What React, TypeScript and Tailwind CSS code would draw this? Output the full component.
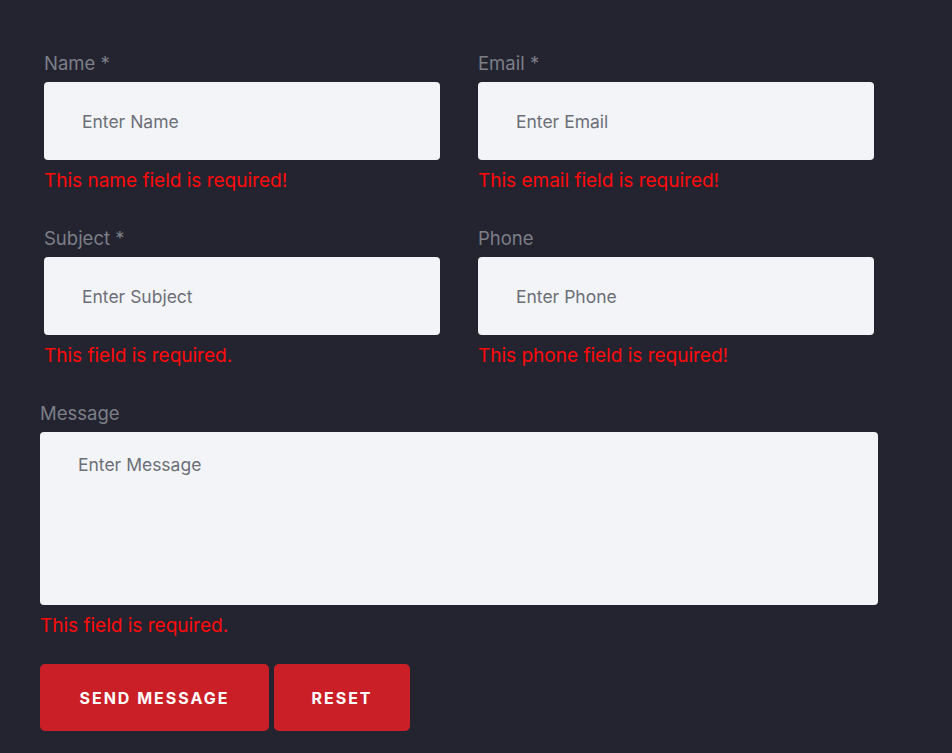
const fields = [
  [
    { label: "Name", required: true, placeholder: "Enter Name", error: "This name field is required!" },
    { label: "Email", required: true, placeholder: "Enter Email", error: "This email field is required!" },
  ],
  [
    { label: "Subject", required: true, placeholder: "Enter Subject", error: "This field is required." },
    { label: "Phone", required: false, placeholder: "Enter Phone", error: "This phone field is required!" },
  ],
]

export default function App() {
  return (
    <div
      className="min-h-screen w-full bg-[#242431] pl-10 pt-[50px]"
      style={{ fontFamily: "Inter, 'Liberation Sans', sans-serif" }}
    >
      <form className="w-[838px]" onSubmit={(e) => e.preventDefault()}>
        {fields.map((row, i) => (
          <div key={i} className="grid grid-cols-2 gap-[30px] mb-[31px]">
            {row.map((f) => (
              <div key={f.label} className="px-1">
                <label className="block text-[18.5px] leading-[27px] text-[#7c7f87] mb-[5px]">
                  {f.label}
                  {f.required && " *"}
                </label>
                <input
                  placeholder={f.placeholder}
                  className="block w-full h-[78px] rounded-[4px] bg-[#f3f4f8] pl-[38px] text-[17.5px] text-[#333] placeholder:text-[#6c6f77] outline-none"
                />
                <p className="mt-[7px] text-[19px] leading-[27px] text-[#ff0a0a]">{f.error}</p>
              </div>
            ))}
          </div>
        ))}

        <label className="block text-[18.5px] leading-[27px] text-[#7c7f87] mb-[5px]">Message</label>
        <textarea
          placeholder="Enter Message"
          className="block w-full h-[173px] rounded-[4px] bg-[#f3f4f8] pl-[38px] pt-[20px] text-[17.5px] text-[#333] placeholder:text-[#6c6f77] outline-none resize-none"
        />
        <p className="mt-[7px] text-[19px] leading-[27px] text-[#ff0a0a]">This field is required.</p>

        <div className="flex gap-[5px] mt-[25px]">
          <button className="h-[67px] w-[229px] rounded-[5px] bg-[#cb1f27] text-white text-[16px] font-bold tracking-[2px]">
            SEND MESSAGE
          </button>
          <button type="reset" className="h-[67px] w-[136px] rounded-[5px] bg-[#cb1f27] text-white text-[16px] font-bold tracking-[2px]">
            RESET
          </button>
        </div>
      </form>
    </div>
  )
}
